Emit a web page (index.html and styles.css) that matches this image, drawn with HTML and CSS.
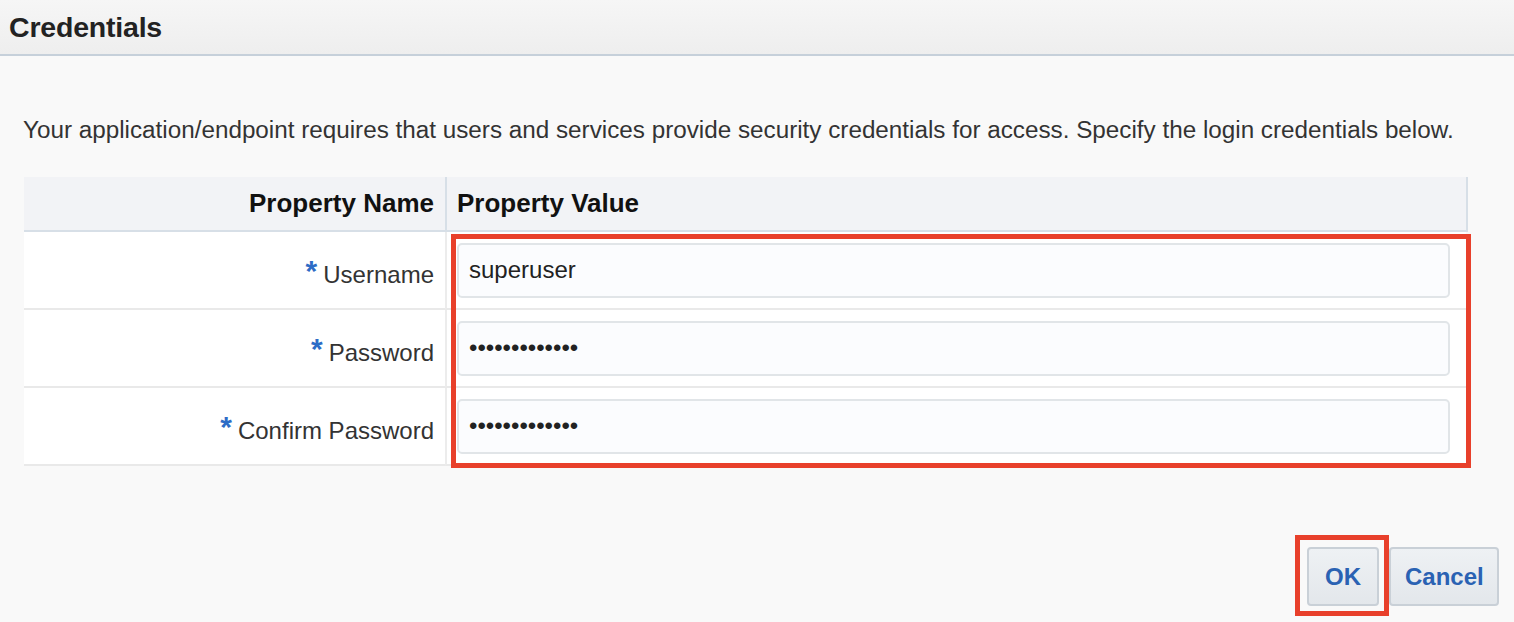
FILE: index.html
```html
<!DOCTYPE html>
<html lang="en">
<head>
<meta charset="utf-8">
<title>Credentials</title>
<link rel="stylesheet" href="styles.css">
</head>
<body>
<header class="titlebar">
  <h1 class="title">Credentials</h1>
</header>
<main class="content">
  <p class="intro">Your application/endpoint requires that users and services provide security credentials for access. Specify the login credentials below.</p>
  <div class="props">
    <div class="grid">
      <div class="hcell hname">Property Name</div>
      <div class="hcell hvalue">Property Value</div>

      <div class="cell name"><span class="req">*</span> Username</div>
      <div class="cell value"><input class="field" type="text" value="superuser"></div>

      <div class="cell name"><span class="req">*</span> Password</div>
      <div class="cell value"><input class="field" type="password" value="superuser1234"></div>

      <div class="cell name"><span class="req">*</span> Confirm Password</div>
      <div class="cell value"><input class="field" type="password" value="superuser1234"></div>
    </div>
    <div class="mark mark-values"></div>
  </div>
  <div class="actions">
    <div class="ok-wrap">
      <button class="btn btn-ok" type="button">OK</button>
    </div>
    <button class="btn btn-cancel" type="button">Cancel</button>
  </div>
</main>
</body>
</html>
```
FILE: styles.css
```css
* { box-sizing: border-box; }

html, body {
  margin: 0;
  padding: 0;
  background: #f9f9f9;
  font-family: "Liberation Sans", Arial, Helvetica, sans-serif;
  color: #333;
}

.titlebar {
  height: 56px;
  background: linear-gradient(#f6f6f6, #eeeeee);
  border-bottom: 2px solid #c6d0da;
  display: flex;
  align-items: center;
  padding-left: 9px;
}

.title {
  margin: 0;
  font-size: 28.5px;
  font-weight: bold;
  color: #222;
  letter-spacing: -0.2px;
}

.content {
  padding: 0 46px 0 24px;
}

.intro {
  margin: 62px 0 0 -1px;
  font-size: 24.25px;
  line-height: 24px;
  color: #333;
  white-space: nowrap;
}

.props {
  position: relative;
  margin-top: 35px;
  width: 1444px;
}

.grid {
  display: grid;
  grid-template-columns: 421px 1fr;
}

.hcell {
  height: 55px;
  background: #f2f3f6;
  border-bottom: 2px solid #d7dfe7;
  font-size: 26px;
  font-weight: bold;
  color: #111;
  display: flex;
  align-items: center;
}

.hname {
  justify-content: flex-end;
  padding-right: 11px;
}

.hvalue {
  border-left: 2px solid #d7dfe7;
  border-right: 2px solid #d7dfe7;
  padding-left: 10px;
}

.cell {
  height: 78px;
  background: #fff;
  border-bottom: 2px solid #e9e9e9;
  display: flex;
  align-items: center;
}

.name {
  justify-content: flex-end;
  padding-right: 11px;
  padding-top: 9px;
  font-size: 24px;
  color: #333;
}

.req {
  color: #2d6cc6;
  font-weight: bold;
  font-size: 30px;
  align-self: center;
  margin-top: -8px;
  margin-right: 6px;
}

.value {
  border-left: 2px solid #ececec;
  margin-right: 2px;
  padding: 0 16px 0 10px;
}

.field {
  width: 100%;
  height: 55px;
  border: 2px solid #e1e5e8;
  border-radius: 5px;
  background: #fbfcfe;
  padding: 0 10px;
  font-family: "Liberation Sans", Arial, sans-serif;
  font-size: 24px;
  color: #222;
  outline: none;
}

.mark {
  position: absolute;
  border: 5px solid #e8402b;
  pointer-events: none;
}

.mark-values {
  left: 427px;
  top: 57px;
  width: 1020px;
  height: 234px;
}

.actions {
  display: flex;
  justify-content: flex-end;
  align-items: flex-start;
  margin-top: 69px;
  margin-right: -31px;
}

.ok-wrap {
  display: flex;
  border: 5px solid #e8402b;
  padding: 7px 5px 5px 7px;
  margin-right: 0;
}

.btn {
  height: 59px;
  padding: 0 14px;
  background: linear-gradient(#eef1f4, #e3e7eb);
  border: 2px solid #c9d0d7;
  border-radius: 4px;
  font-family: "Liberation Sans", Arial, sans-serif;
  font-size: 24px;
  font-weight: bold;
  color: #2a62b3;
}

.btn-ok {
  width: 72px;
}

.btn-cancel {
  margin-top: 12px;
  width: 110px;
}
```
